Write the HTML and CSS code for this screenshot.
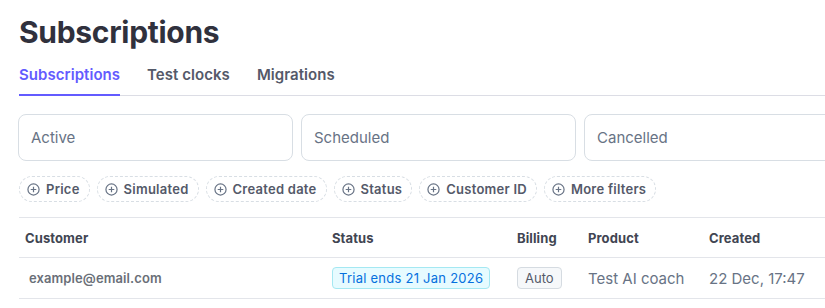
FILE: index.html
```html
<!DOCTYPE html>
<html lang="en">
<head>
  <meta charset="UTF-8">
  <title>Subscriptions</title>
  <link rel="stylesheet" href="styles.css">
</head>
<body>
  <div class="page">
    <h1>Subscriptions</h1>

    <nav class="tabs">
      <a class="tab active">Subscriptions</a>
      <a class="tab">Test clocks</a>
      <a class="tab">Migrations</a>
    </nav>

    <div class="status-cards">
      <div class="status-card">Active</div>
      <div class="status-card">Scheduled</div>
      <div class="status-card">Cancelled</div>
    </div>

    <div class="filters">
      <button class="filter"><svg viewBox="0 0 14 14"><circle cx="7" cy="7" r="6"/><path d="M7 4v6M4 7h6"/></svg>Price</button>
      <button class="filter"><svg viewBox="0 0 14 14"><circle cx="7" cy="7" r="6"/><path d="M7 4v6M4 7h6"/></svg>Simulated</button>
      <button class="filter"><svg viewBox="0 0 14 14"><circle cx="7" cy="7" r="6"/><path d="M7 4v6M4 7h6"/></svg>Created date</button>
      <button class="filter"><svg viewBox="0 0 14 14"><circle cx="7" cy="7" r="6"/><path d="M7 4v6M4 7h6"/></svg>Status</button>
      <button class="filter"><svg viewBox="0 0 14 14"><circle cx="7" cy="7" r="6"/><path d="M7 4v6M4 7h6"/></svg>Customer ID</button>
      <button class="filter"><svg viewBox="0 0 14 14"><circle cx="7" cy="7" r="6"/><path d="M7 4v6M4 7h6"/></svg>More filters</button>
    </div>

    <table class="subs">
      <colgroup>
        <col class="c-customer">
        <col class="c-status">
        <col class="c-billing">
        <col class="c-product">
        <col class="c-created">
      </colgroup>
      <thead>
        <tr>
          <th>Customer</th>
          <th>Status</th>
          <th>Billing</th>
          <th>Product</th>
          <th>Created</th>
        </tr>
      </thead>
      <tbody>
        <tr>
          <td class="email">example@email.com</td>
          <td><span class="badge trial">Trial ends 21 Jan 2026</span></td>
          <td><span class="badge auto">Auto</span></td>
          <td class="muted">Test AI coach</td>
          <td class="muted">22 Dec, 17:47</td>
        </tr>
      </tbody>
    </table>
  </div>
</body>
</html>
```

FILE: styles.css
```css
* {
  box-sizing: border-box;
  margin: 0;
  padding: 0;
}
body {
  font-family: Inter, "Noto Sans", sans-serif;
  background: #fff;
  color: #30313d;
  overflow: hidden;
}
.page {
  padding: 14px 0 0 19px;
  width: 900px;
}
h1 {
  font-size: 30px;
  font-weight: 700;
  letter-spacing: -0.3px;
  line-height: 36px;
  color: #30313d;
}
.tabs {
  display: flex;
  gap: 27px;
  margin-top: 15px;
  border-bottom: 1px solid #dcdde5;
}
.tab {
  font-size: 15px;
  font-weight: 600;
  letter-spacing: 0.05px;
  color: #545969;
  line-height: 20px;
  padding-bottom: 9px;
  border-bottom: 2px solid transparent;
  margin-bottom: -1px;
}
.tab.active {
  color: #635bff;
  border-bottom-color: #635bff;
}
.status-cards {
  display: flex;
  gap: 8px;
  margin-top: 18px;
  margin-left: -1px;
}
.status-card {
  flex: 0 0 275px;
  height: 47px;
  border: 1px solid #d8dee4;
  border-radius: 8px;
  padding: 0 12px;
  display: flex;
  align-items: center;
  font-size: 15px;
  color: #687385;
}
.filters {
  display: flex;
  gap: 7px;
  margin-top: 15px;
}
.filter {
  display: flex;
  align-items: center;
  gap: 6px;
  height: 26px;
  padding: 0 9px 0 7px;
  border: 1px dashed #d8dee4;
  border-radius: 13px;
  background: #fff;
  font-family: inherit;
  font-size: 13px;
  font-weight: 600;
  letter-spacing: 0.25px;
  color: #545969;
}
.filter svg {
  width: 13px;
  height: 13px;
  fill: none;
  stroke: #687385;
  stroke-width: 1.3;
}
.subs {
  margin-top: 15px;
  width: 830px;
  border-collapse: collapse;
  table-layout: fixed;
}
.c-customer { width: 307px; }
.c-status { width: 185px; }
.c-billing { width: 71px; }
.c-product { width: 121px; }
.c-created { width: 146px; }
th, td {
  text-align: left;
  padding: 0 6px;
  border-top: 1px solid #e3e5ea;
  border-bottom: 1px solid #e3e5ea;
}
th {
  height: 40px;
  font-size: 13px;
  font-weight: 700;
  letter-spacing: 0.1px;
  color: #414552;
}
td {
  height: 41px;
  font-size: 15px;
}
td.email {
  font-size: 13px;
  font-weight: 600;
  letter-spacing: 0.1px;
  color: #6a6f78;
  padding-left: 10px;
}
td.muted {
  color: #687385;
}
.badge {
  display: inline-block;
  font-size: 13px;
  line-height: 18px;
  border-radius: 4px;
  padding: 1px 6px;
}
.badge.trial {
  background: #e6fbff;
  border: 1px solid #a4e8f2;
  color: #0570de;
  letter-spacing: 0.25px;
}
.badge.auto {
  background: #f6f8fa;
  border: 1px solid #d5dbe1;
  color: #545969;
  padding: 1px 7px;
}
```
